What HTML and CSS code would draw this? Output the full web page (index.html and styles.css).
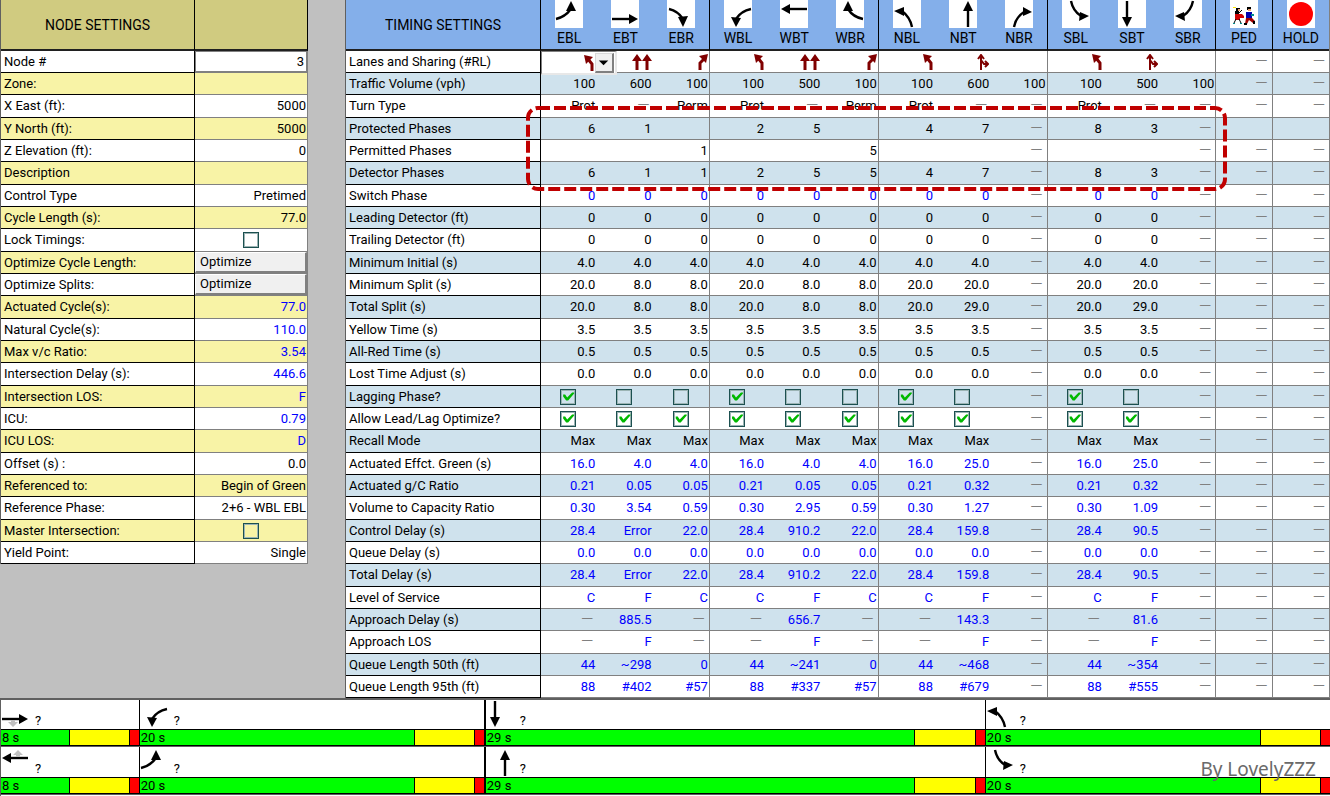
FILE: index.html
```html
<!DOCTYPE html>
<html lang="en">
<head>
<meta charset="utf-8">
<title>Timing Settings</title>
<link rel="stylesheet" href="styles.css">
</head>
<body>
<svg class="defs" aria-hidden="true">
  <symbol id="EBL" viewBox="0 0 28 28"><path class="ln" d="M1 19Q10 17 16 9"/><path d="M16 1 21 11 11 11Z"/></symbol>
  <symbol id="EBT" viewBox="0 0 28 28"><path class="ln" d="M1 19H20"/><path d="M27 19 18 14V24Z"/></symbol>
  <symbol id="EBR" viewBox="0 0 28 28"><path class="ln" d="M2 9Q11 11 16 19"/><path d="M16 27 11 17 21 16Z"/></symbol>
  <symbol id="WBL" viewBox="0 0 28 28"><path class="ln" d="M27 9Q17 11 12 19"/><path d="M12 27 7 17 17 18Z"/></symbol>
  <symbol id="WBT" viewBox="0 0 28 28"><path class="ln" d="M27 9H8"/><path d="M1 9 10 4V14Z"/></symbol>
  <symbol id="WBR" viewBox="0 0 28 28"><path class="ln" d="M27 19Q17 17 12 9"/><path d="M12 1 17 11 7 11Z"/></symbol>
  <symbol id="NBL" viewBox="0 0 28 28"><path class="ln" d="M19 27Q17 17 9 11"/><path d="M1 11 11 7 11 16Z"/></symbol>
  <symbol id="NBT" viewBox="0 0 28 28"><path class="ln" d="M19 27V9"/><path d="M19 1 24 11H14Z"/></symbol>
  <symbol id="NBR" viewBox="0 0 28 28"><path class="ln" d="M9 27Q11 17 19 12"/><path d="M27 12 18 7 18 16Z"/></symbol>
  <symbol id="SBL" viewBox="0 0 28 28"><path class="ln" d="M9 1Q11 11 19 16"/><path d="M27 16 18 12 17 21Z"/></symbol>
  <symbol id="SBT" viewBox="0 0 28 28"><path class="ln" d="M9 1V19"/><path d="M9 27 4 17H14Z"/></symbol>
  <symbol id="SBR" viewBox="0 0 28 28"><path class="ln" d="M19 1Q17 11 9 16"/><path d="M1 16 10 12 11 21Z"/></symbol>
  <symbol id="PED" viewBox="0 0 28 28">
    <path fill="#ffe600" d="M3 7h3v1H3zM6 8h1v2H6z"/><path d="M6 8h4v3H6z"/><path fill="#e8a070" d="M8 9h2v2H8z"/>
    <path d="M5 11h4v4H5z"/><path fill="#d00000" d="M5 14h7l2 2v2h-4v2H5z"/>
    <path stroke="#000" fill="none" d="M6 19 4 23M9 19 11 23M9 13 12 10"/>
    <path fill="#008c8c" d="M3 23h2v1H3zM10 23h2v1h-2z"/>
    <path d="M17 7h4v3h-4z"/><path fill="#e8a070" d="M18 9h3v2h-3z"/>
    <path fill="#0000b0" d="M16 12h6v6h-6z"/><path fill="#008c8c" d="M21 14h3v2h-3z"/>
    <path fill="#a00000" d="M16 18h6l3 3-2 2-4-3-2 4h-2z"/>
    <path d="M14 23h3v2h-3zM23 21h2v3h-2z"/>
  </symbol>
  <symbol id="HOLD" viewBox="0 0 28 28"><circle cx="14" cy="14" r="12" fill="#f00"/></symbol>
  <symbol id="laneL" viewBox="0 0 10 16"><path class="lane" d="M8 16V9L4 4"/><path d="M0 0 9 2 2 9Z"/></symbol>
  <symbol id="laneR" viewBox="0 0 10 16"><path class="lane" d="M2 16V9L6 5"/><path d="M10 0 8 9 1 2Z"/></symbol>
  <symbol id="laneTT" viewBox="0 0 20 16"><path class="lane" d="M5 16V5M15 16V5"/><path d="M5 0 10 7H0ZM15 0 20 7H10Z"/></symbol>
  <symbol id="laneTR" viewBox="0 0 12 16"><path class="open" d="M4 16V1M1 5 4 1 7 5M4 6 7 10H11M8 7 11 10 8 13"/></symbol>
</svg>

<main class="app">
  <div class="tables">
    <table class="grid node">
      <thead><tr><th>NODE SETTINGS</th><th></th></tr></thead>
      <tbody id="node-rows"></tbody>
    </table>
    <section class="timing-wrap">
      <table class="grid timing">
        <thead><tr id="timing-head"><th class="name">TIMING SETTINGS</th></tr></thead>
        <tbody id="timing-rows"></tbody>
      </table>
      <svg class="callout" aria-hidden="true"><rect x="2" y="2" rx="10"/></svg>
    </section>
  </div>
  <section class="phases" id="phases"></section>
  <p class="credit">By LovelyZZZ</p>
</main>
<script src="app.js"></script>
</body>
</html>
```
FILE: styles.css
```css
* { box-sizing: border-box; }

body {
  margin: 0;
  background: #c0c0c0;
  color: #000;
  font: 13px/16px Roboto, "Liberation Sans", sans-serif;
}

.defs { position: absolute; width: 0; height: 0; }
.ln { fill: none; stroke: #000; stroke-width: 2.4; }
.lane { fill: none; stroke: #800000; stroke-width: 3; }
.open { fill: none; stroke: #800000; stroke-width: 2; }

.app {
  position: relative;
  display: flex;
  flex-direction: column;
  min-height: 100vh;
}

.tables {
  display: flex;
  align-items: flex-start;
  gap: 37px;
  border-bottom: 2px solid #606060;
}

.grid {
  table-layout: fixed;
  border-collapse: separate;
  border-spacing: 0;
  background: #fff;
  border-left: 1px solid #606060;
}
.grid th, .grid td { padding: 0; white-space: nowrap; }
.grid thead th {
  height: 51px;
  border-bottom: 2px solid #202020;
  font-weight: 400;
  font-size: 14px;
}
.grid tbody tr { height: 22px; }
.grid tbody tr:nth-child(3n) { height: 23px; }
.grid tbody th {
  padding-left: 3px;
  border-right: 1px solid #000;
  border-bottom: 1px solid #000;
  text-align: left;
  font-weight: 400;
}
.grid tbody td {
  padding-right: 2px;
  border-bottom: 1px solid #808080;
  text-align: right;
}
.grid .calc { color: #0000ff; }

/* node table */
.node { flex: 0 0 308px; width: 308px; }
.node thead th { background: #d0cb80; border-right: 1px solid #000; }
.node thead th:first-child { width: 194px; }
.node tbody td { padding-right: 1px; border-right: 1px solid #808080; }
.node tbody tr:nth-child(even) { background: #f8f3a6; }
.node .mid { text-align: center; }
.node .fill { padding: 0; }
.node input[type="text"] {
  display: block;
  width: 100%;
  height: 21px;
  padding: 0 2px;
  border: 1px solid #808080;
  background: #fff;
  font: inherit;
  text-align: right;
}
.node button {
  display: block;
  width: 100%;
  height: 21px;
  padding: 0 4px;
  border: 1px solid #fff;
  border-right: 2px solid #808080;
  border-bottom: 2px solid #808080;
  background: #f0f0f0;
  color: #000;
  font: inherit;
  text-align: left;
}

/* timing table */
.timing-wrap { position: relative; flex: 1; min-width: 0; }
.timing { width: 100%; border-right: 1px solid #808080; }
.timing thead th { background: #84afea; vertical-align: top; }
.timing thead .name {
  width: 195px;
  border-right: 1px solid #000;
  vertical-align: middle;
}
.timing tbody tr:nth-child(even) { background: #cfe2ed; }
.timing thead th.edge { border-right: 1px solid #000; }
.timing tbody td.edge { padding-right: 1px; border-right: 1px solid #808080; }
.timing .mid { text-align: center; }
.timing tbody td.none { padding-right: 4px; color: #808080; font-size: 16px; font-weight: 300; }
.turn { display: block; width: 28px; height: 28px; margin: 0 auto 2px; background: #fff; }

.lanes { display: block; height: 16px; margin-left: auto; fill: #800000; }
.w10 { width: 10px; }
.w12 { width: 12px; }
.w20 { width: 20px; }

.combo-cell { position: relative; }
.combo {
  position: absolute;
  z-index: 1;
  top: 0;
  left: 0;
  display: flex;
  align-items: center;
  justify-content: flex-end;
  gap: 1px;
  width: 76px;
  height: 24px;
  padding: 1px;
  border: 1px solid #808080;
  border-right: 2px solid #e8e8e8;
  border-bottom: 2px solid #e8e8e8;
  background: #fff;
}
.combo .lanes { margin-left: 0; }
.combo select {
  position: absolute;
  inset: 0;
  width: 100%;
  border: 0;
  background: transparent;
  appearance: none;
}
.combo .drop {
  width: 19px;
  height: 20px;
  border: 1px solid #d8d8d8;
  border-right: 2px solid #808080;
  border-bottom: 2px solid #808080;
  background: #f0f0f0;
}

input[type="checkbox"] {
  display: block;
  width: 16px;
  height: 16px;
  margin: 0 auto;
  border: 1px solid #1c5050;
  outline: 1px solid #9cb4b4;
  outline-offset: -2px;
  appearance: none;
}
input[type="checkbox"]:checked::before {
  content: "";
  display: block;
  width: 14px;
  height: 14px;
  background: #00b800;
  clip-path: polygon(2px 5px, 4px 5px, 6px 8px, 11px 3px, 13px 3px, 13px 4px, 7px 11px, 5px 11px, 2px 7px);
}

.callout {
  position: absolute;
  top: 106px;
  left: 181px;
  width: calc(100% - 284px);
  height: 85px;
  pointer-events: none;
}
.callout rect {
  width: calc(100% - 4px);
  height: calc(100% - 4px);
  fill: none;
  stroke: #c00000;
  stroke-width: 4;
  stroke-dasharray: 12 4;
}

/* ring-and-barrier diagram */
.phases { flex: 1; border-left: 1px solid #606060; background: #fff; }
.ring { display: flex; border-bottom: 1px solid #606060; }
.phase { flex-basis: 0; min-width: 0; border-left: 1px solid #000; }
.phase:first-child { border-left: 0; }
.phase.barrier { border-left: 2px solid #000; }
.move {
  display: flex;
  align-items: flex-end;
  gap: 6px;
  height: 29px;
}
.ring + .ring .move { height: 30px; }
.move svg { width: 28px; height: 28px; }
.ring:first-child .move svg { align-self: flex-start; }
.split { display: flex; height: 17px; border: solid #000; border-width: 1px 0; }
.split span { flex-basis: 0; min-width: 0; }
.green { padding-left: 1px; background: #0f0; white-space: nowrap; }
.yellow { border-left: 1px solid #000; background: #ff0; }
.red { border-left: 1px solid #000; background: #f00; }

.credit {
  position: absolute;
  right: 14px;
  bottom: 14px;
  margin: 0;
  color: #6a6a6a;
  font: 19px/26px "Noto Sans", sans-serif;
}
```
FILE: app.js
```js
const use = (id, cls, extra = "") =>
  `<svg class="${cls}" aria-hidden="true"><use href="#${id}"/>${extra}</svg>`;

// [label, value, kind]
const nodeRows = [
  ["Node #", "3", "text"], ["Zone:", ""], ["X East (ft):", "5000"], ["Y North (ft):", "5000"],
  ["Z Elevation (ft):", "0"], ["Description", ""], ["Control Type", "Pretimed"],
  ["Cycle Length (s):", "77.0"], ["Lock Timings:", "", "check"],
  ["Optimize Cycle Length:", "Optimize", "button"], ["Optimize Splits:", "Optimize", "button"],
  ["Actuated Cycle(s):", "77.0", "calc"], ["Natural Cycle(s):", "110.0", "calc"],
  ["Max v/c Ratio:", "3.54", "calc"], ["Intersection Delay (s):", "446.6", "calc"],
  ["Intersection LOS:", "F", "calc"], ["ICU:", "0.79", "calc"], ["ICU LOS:", "D", "calc"],
  ["Offset (s) :", "0.0"], ["Referenced to:", "Begin of Green"],
  ["Reference Phase:", "2+6 - WBL EBL"], ["Master Intersection:", "", "check"],
  ["Yield Point:", "Single"]
];
document.getElementById("node-rows").innerHTML = nodeRows.map(([label, value, kind], i) => {
  let head = label, cell = `<td>${value}</td>`;
  if (kind === "text") {
    head = `<label for="n${i}">${label}</label>`;
    cell = `<td class="fill"><input type="text" id="n${i}" value="${value}"></td>`;
  } else if (kind === "check") {
    head = `<label for="n${i}">${label}</label>`;
    cell = `<td class="mid"><input type="checkbox" id="n${i}"></td>`;
  } else if (kind === "button") {
    cell = `<td class="fill"><button type="button">${value}</button></td>`;
  } else if (kind === "calc") {
    cell = `<td class="calc">${value}</td>`;
  }
  return `<tr><th scope="row">${head}</th>${cell}</tr>`;
}).join("");

const columns = ["EBL", "EBT", "EBR", "WBL", "WBT", "WBR", "NBL", "NBT", "NBR", "SBL", "SBT", "SBR", "PED", "HOLD"];
const edge = c => (c % 3 === 2 || c === 12 ? " edge" : "");
document.getElementById("timing-head").innerHTML += columns
  .map((name, c) => `<th scope="col" class="${edge(c)}">${use(name, "turn")}${name}</th>`).join("");

// "." is an empty cell, "-" a cell that does not apply; missing trailing cells do not apply.
const timingRows = [
  ["Lanes and Sharing (#RL)", "laneL laneTT laneR laneL laneTT laneR laneL laneTR . laneL laneTR ."],
  ["Traffic Volume (vph)", "100 600 100 100 500 100 100 600 100 100 500 100"],
  ["Turn Type", "Prot - Perm Prot - Perm Prot - - Prot - -"],
  ["Protected Phases", "6 1 . 2 5 . 4 7 - 8 3 - . ."],
  ["Permitted Phases", ". . 1 . . 5 . . - . . -"],
  ["Detector Phases", "6 1 1 2 5 5 4 7 - 8 3 -"],
  ["Switch Phase", "0 0 0 0 0 0 0 0 - 0 0 -", "calc"],
  ["Leading Detector (ft)", "0 0 0 0 0 0 0 0 - 0 0 -"],
  ["Trailing Detector (ft)", "0 0 0 0 0 0 0 0 - 0 0 -"],
  ["Minimum Initial (s)", "4.0 4.0 4.0 4.0 4.0 4.0 4.0 4.0 - 4.0 4.0 -"],
  ["Minimum Split (s)", "20.0 8.0 8.0 20.0 8.0 8.0 20.0 20.0 - 20.0 20.0 -"],
  ["Total Split (s)", "20.0 8.0 8.0 20.0 8.0 8.0 20.0 29.0 - 20.0 29.0 -"],
  ["Yellow Time (s)", "3.5 3.5 3.5 3.5 3.5 3.5 3.5 3.5 - 3.5 3.5 -"],
  ["All-Red Time (s)", "0.5 0.5 0.5 0.5 0.5 0.5 0.5 0.5 - 0.5 0.5 -"],
  ["Lost Time Adjust (s)", "0.0 0.0 0.0 0.0 0.0 0.0 0.0 0.0 - 0.0 0.0 -"],
  ["Lagging Phase?", "on off off on off off on off - on off -"],
  ["Allow Lead/Lag Optimize?", "on on on on on on on on - on on -"],
  ["Recall Mode", "Max Max Max Max Max Max Max Max - Max Max -"],
  ["Actuated Effct. Green (s)", "16.0 4.0 4.0 16.0 4.0 4.0 16.0 25.0 - 16.0 25.0 -", "calc"],
  ["Actuated g/C Ratio", "0.21 0.05 0.05 0.21 0.05 0.05 0.21 0.32 - 0.21 0.32 -", "calc"],
  ["Volume to Capacity Ratio", "0.30 3.54 0.59 0.30 2.95 0.59 0.30 1.27 - 0.30 1.09 -", "calc"],
  ["Control Delay (s)", "28.4 Error 22.0 28.4 910.2 22.0 28.4 159.8 - 28.4 90.5 -", "calc"],
  ["Queue Delay (s)", "0.0 0.0 0.0 0.0 0.0 0.0 0.0 0.0 - 0.0 0.0 -", "calc"],
  ["Total Delay (s)", "28.4 Error 22.0 28.4 910.2 22.0 28.4 159.8 - 28.4 90.5 -", "calc"],
  ["Level of Service", "C F C C F C C F - C F -", "calc"],
  ["Approach Delay (s)", "- 885.5 - - 656.7 - - 143.3 - - 81.6 -", "calc"],
  ["Approach LOS", "- F - - F - - F - - F -", "calc"],
  ["Queue Length 50th (ft)", "44 ~298 0 44 ~241 0 44 ~468 - 44 ~354 -", "calc"],
  ["Queue Length 95th (ft)", "88 #402 #57 88 #337 #57 88 #679 - 88 #555 -", "calc"]
];
const laneWidth = { laneL: "w10", laneR: "w10", laneTT: "w20", laneTR: "w12" };

function timingCell(value, r, c, label, kind) {
  const e = edge(c);
  if (r === 0 && c === 0) {
    return `<td class="combo-cell"><div class="combo">${use(value, "lanes w10")}` +
      `<svg class="drop" viewBox="0 0 17 18" aria-hidden="true"><path d="M3 7h10l-5 5z"/></svg>` +
      `<select aria-label="${label} ${columns[c]}"><option></option></select></div></td>`;
  }
  if (laneWidth[value]) return `<td class="${e}">${use(value, "lanes " + laneWidth[value])}</td>`;
  if (value === "on" || value === "off") {
    return `<td class="mid${e}"><input type="checkbox" aria-label="${label} ${columns[c]}"${value === "on" ? " checked" : ""}></td>`;
  }
  if (value === "-") return `<td class="none${e}">—</td>`;
  return `<td class="${kind}${e}">${value === "." ? "" : value}</td>`;
}
document.getElementById("timing-rows").innerHTML = timingRows.map(([label, data, kind = ""], r) => {
  const values = data.split(" ");
  return `<tr><th scope="row">${label}</th>` +
    columns.map((_, c) => timingCell(values[c] || "-", r, c, label, kind)).join("") + "</tr>";
}).join("");

// Permitted right turns are drawn in grey beside the through arrow.
const permitted = {
  EBT: '<path fill="#c0c0c0" d="M10 20h4v2h3l-5 5-5-5h3z"/>',
  WBT: '<path fill="#c0c0c0" d="M15 8h4V6h3l-5-5-5 5h3z"/>'
};
const rings = [
  [["EBT", 8], ["WBL", 20], ["SBT", 29], ["NBL", 20]],
  [["WBT", 8], ["EBL", 20], ["NBT", 29], ["SBL", 20]]
];
document.getElementById("phases").innerHTML = rings.map(ring =>
  `<div class="ring">${ring.map(([move, s]) =>
    `<div class="phase${s === 29 ? " barrier" : ""}" style="flex-grow:${s}">` +
    `<div class="move">${use(move, "", permitted[move] || "")}<span>?</span></div>` +
    `<div class="split"><span class="green" style="flex-grow:${s - 4}">${s} s</span>` +
    `<span class="yellow" style="flex-grow:3.5"></span><span class="red" style="flex-grow:0.5"></span></div></div>`
  ).join("")}</div>`).join("");
```
